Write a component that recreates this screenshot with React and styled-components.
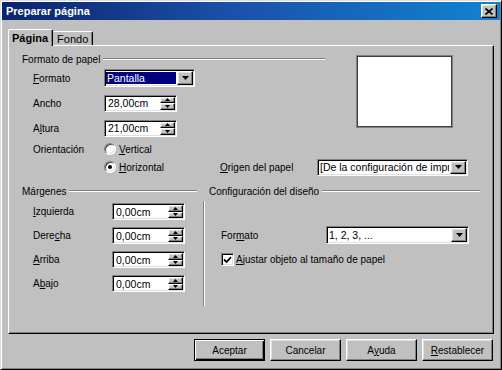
import styled, { createGlobalStyle } from "styled-components";

const GlobalStyle = createGlobalStyle`
  html, body {
    margin: 0;
    padding: 0;
    background: #c0c0c0;
  }
  body {
    font-family: "Liberation Sans", Arial, sans-serif;
    font-size: 10px;
    color: #000;
  }
`;

/** 3D 경계 (Windows classic) */
const raised = `
  border-style: solid;
  border-width: 1px;
  border-color: #fff #000 #000 #fff;
  box-shadow: inset -1px -1px #808080, inset 1px 1px #dfdfdf;
`;

const sunken = `
  border-style: solid;
  border-width: 1px;
  border-color: #808080 #fff #fff #808080;
  box-shadow: inset 1px 1px #000, inset -1px -1px #dfdfdf;
`;

const ArrowDown = ({ w = 7, h = 4 }) => (
  <svg width={w} height={h} viewBox={`0 0 ${w} ${h}`}>
    <polygon points={`0,0 ${w},0 ${w / 2},${h}`} fill="#000" />
  </svg>
);

const ArrowUp = ({ w = 5, h = 3 }) => (
  <svg width={w} height={h} viewBox={`0 0 ${w} ${h}`}>
    <polygon points={`0,${h} ${w},${h} ${w / 2},0`} fill="#000" />
  </svg>
);

/** 스핀 입력 */
const SpinField = ({ value, width = 73 }) => (
  <Field $width={width} $height={17}>
    <FieldText>{value}</FieldText>
    <SpinColumn>
      <SpinButton>
        <ArrowUp />
      </SpinButton>
      <SpinButton>
        <ArrowDown w={5} h={3} />
      </SpinButton>
    </SpinColumn>
  </Field>
);

/** 드롭다운 */
const Select = ({ value, width, height = 17, selected }) => (
  <Field $width={width} $height={height}>
    <SelectText $selected={selected}>{value}</SelectText>
    <DropButton>
      <ArrowDown />
    </DropButton>
  </Field>
);

const App = () => {
  return (
    <>
      <GlobalStyle />
      <Window>
        <TitleBar>
          <span>Preparar página</span>
          <CloseButton>
            <svg width="8" height="7" viewBox="0 0 8 7">
              <path d="M0.5 0.5 L7.5 6.5 M7.5 0.5 L0.5 6.5" stroke="#000" strokeWidth="1.6" />
            </svg>
          </CloseButton>
        </TitleBar>

        <Body>
          <TabStrip>
            <Tab $active>Página</Tab>
            <Tab>Fondo</Tab>
          </TabStrip>

          <Panel>
            <TopSection>
              <HeadRow>
                <PaperCol>
                  <GroupHeader>
                    <span>Formato de papel</span>
                    <Rule />
                  </GroupHeader>
                  <FieldList $gap={7} $top={3}>
                    <FieldRow $height={18}>
                      <Label $width={71}>
                        <Accel>F</Accel>ormato
                      </Label>
                      <Select value="Pantalla" width={91} height={18} selected />
                    </FieldRow>
                    <FieldRow $height={18}>
                      <Label $width={71}>Ancho</Label>
                      <SpinField value="28,00cm" width={73} />
                    </FieldRow>
                    <FieldRow $height={18}>
                      <Label $width={71}>
                        A<Accel>l</Accel>tura
                      </Label>
                      <SpinField value="21,00cm" width={73} />
                    </FieldRow>
                  </FieldList>
                </PaperCol>
                <Preview />
              </HeadRow>

              <FieldList $gap={0} $top={3}>
                <FieldRow $height={18}>
                  <Label $width={71}>Orientación</Label>
                  <RadioOption>
                    <Radio />
                    <span>
                      <Accel>V</Accel>ertical
                    </span>
                  </RadioOption>
                </FieldRow>
                <FieldRow $height={18}>
                  <Label $width={71} />
                  <RadioOption>
                    <Radio $checked />
                    <span>
                      <Accel>H</Accel>orizontal
                    </span>
                  </RadioOption>
                  <Label $width={97}>
                    <Accel>O</Accel>rigen del papel
                  </Label>
                  <Select value="[De la configuración de impres" width={151} />
                </FieldRow>
              </FieldList>
            </TopSection>

            <BottomSection>
              <MarginCol>
                <GroupHeader>
                  <span>Márgenes</span>
                  <Rule />
                </GroupHeader>
                <FieldList $gap={7} $top={5}>
                  <FieldRow $height={17}>
                    <Label $width={79}>
                      <Accel>I</Accel>zquierda
                    </Label>
                    <SpinField value="0,00cm" />
                  </FieldRow>
                  <FieldRow $height={17}>
                    <Label $width={79}>
                      Dere<Accel>c</Accel>ha
                    </Label>
                    <SpinField value="0,00cm" />
                  </FieldRow>
                  <FieldRow $height={17}>
                    <Label $width={79}>
                      <Accel>A</Accel>rriba
                    </Label>
                    <SpinField value="0,00cm" />
                  </FieldRow>
                  <FieldRow $height={17}>
                    <Label $width={79}>
                      A<Accel>b</Accel>ajo
                    </Label>
                    <SpinField value="0,00cm" />
                  </FieldRow>
                </FieldList>
              </MarginCol>

              <LayoutCol>
                <GroupHeader $indent={6}>
                  <span>Configuración del diseño</span>
                  <Rule />
                </GroupHeader>
                <LayoutBody>
                  <FieldRow $height={18} $indent={0}>
                    <Label $width={105}>
                      For<Accel>m</Accel>ato
                    </Label>
                    <Select value="1, 2, 3, ..." width={143} height={18} />
                  </FieldRow>
                  <CheckRow>
                    <CheckBox>
                      <svg width="9" height="8" viewBox="0 0 9 8">
                        <polyline points="1,3.5 3.5,6 8,1.2" fill="none" stroke="#000" strokeWidth="1.8" />
                      </svg>
                    </CheckBox>
                    <span>
                      <Accel>A</Accel>justar objeto al tamaño de papel
                    </span>
                  </CheckRow>
                </LayoutBody>
              </LayoutCol>
            </BottomSection>
          </Panel>

          <ButtonRow>
            <Button $default>Aceptar</Button>
            <Button>Cancelar</Button>
            <Button>
              A<Accel>y</Accel>uda
            </Button>
            <Button>
              <Accel>R</Accel>establecer
            </Button>
          </ButtonRow>
        </Body>
      </Window>
    </>
  );
};

export default App;

const Window = styled.div`
  width: 502px;
  height: 370px;
  box-sizing: border-box;
  background: #c0c0c0;
  border: 1px solid;
  border-color: #dfdfdf #000 #000 #dfdfdf;
  box-shadow: inset 1px 1px #fff, inset -1px -1px #808080;
  padding: 1px;
  display: flex;
  flex-direction: column;
`;

const TitleBar = styled.div`
  height: 18px;
  flex-shrink: 0;
  display: flex;
  align-items: center;
  justify-content: space-between;
  padding: 0 3px 0 4px;
  background: linear-gradient(to right, #0a246a 0%, #1c4fa8 45%, #1084d0 100%);
  color: #fff;
  font-size: 11px;
  font-weight: bold;
`;

const CloseButton = styled.div`
  width: 16px;
  height: 14px;
  box-sizing: border-box;
  background: #c0c0c0;
  ${raised}
  display: flex;
  align-items: center;
  justify-content: center;
`;

const Body = styled.div`
  flex: 1;
  display: flex;
  flex-direction: column;
  padding: 9px 6px 0 6px;
`;

const TabStrip = styled.div`
  display: flex;
  align-items: flex-end;
  height: 17px;
  margin-bottom: -1px;
  position: relative;
  z-index: 1;
`;

const Tab = styled.div`
  box-sizing: border-box;
  background: #c0c0c0;
  font-size: 11px;
  border-style: solid;
  border-color: #fff #000 transparent #fff;
  border-radius: 2px 2px 0 0;
  box-shadow: inset -1px 0 #808080;
  display: flex;
  align-items: center;
  ${({ $active }) =>
    $active
      ? `
    height: 17px;
    padding: 0 4px 1px 3px;
    border-width: 1px 1px 0 1px;
    font-weight: bold;
  `
      : `
    height: 14px;
    margin-bottom: 1px;
    padding: 0 4px 0 4px;
    border-width: 1px 1px 0 0;
  `}
`;

const Panel = styled.div`
  height: 289px;
  box-sizing: border-box;
  border: 1px solid;
  border-color: #fff #000 #000 #fff;
  box-shadow: inset -1px -1px #808080;
  display: flex;
  flex-direction: column;
`;

const TopSection = styled.div`
  padding: 6px 0 0 13px;
  display: flex;
  flex-direction: column;
`;

const HeadRow = styled.div`
  display: flex;
  gap: 32px;
`;

const PaperCol = styled.div`
  width: 303px;
  display: flex;
  flex-direction: column;
`;

const GroupHeader = styled.div`
  height: 14px;
  display: flex;
  align-items: center;
  gap: 3px;
  padding-left: ${({ $indent }) => $indent || 0}px;
  white-space: nowrap;
`;

const Rule = styled.div`
  flex: 1;
  height: 0;
  border-top: 1px solid #808080;
  border-bottom: 1px solid #fff;
`;

const Preview = styled.div`
  width: 95px;
  height: 71px;
  margin-top: 4px;
  box-sizing: border-box;
  background: #fff;
  border: 1px solid #404040;
  box-shadow: 0 0 0 1px #808080;
`;

const FieldList = styled.div`
  display: flex;
  flex-direction: column;
  gap: ${({ $gap }) => $gap}px;
  margin-top: ${({ $top }) => $top}px;
`;

const FieldRow = styled.div`
  height: ${({ $height }) => $height}px;
  display: flex;
  align-items: center;
  padding-left: ${({ $indent }) => ($indent === undefined ? 11 : $indent)}px;
`;

const Label = styled.div`
  width: ${({ $width }) => $width}px;
  flex-shrink: 0;
  white-space: nowrap;
`;

const Accel = styled.span`
  text-decoration: underline;
`;

const Field = styled.div`
  width: ${({ $width }) => $width}px;
  height: ${({ $height }) => $height}px;
  box-sizing: border-box;
  flex-shrink: 0;
  background: #fff;
  ${sunken}
  padding: 1px;
  display: flex;
  align-items: stretch;
  overflow: hidden;
`;

const FieldText = styled.div`
  flex: 1;
  min-width: 0;
  padding-left: 2px;
  display: flex;
  align-items: center;
  white-space: nowrap;
  font-size: 10.5px;
`;

const SelectText = styled(FieldText)`
  overflow: hidden;
  margin: 1px 1px 1px 0;
  padding-left: 1px;
  background: ${({ $selected }) => ($selected ? "#000080" : "#fff")};
  color: ${({ $selected }) => ($selected ? "#fff" : "#000")};
`;

const SpinColumn = styled.div`
  width: 15px;
  display: flex;
  flex-direction: column;
`;

const SpinButton = styled.div`
  flex: 1;
  box-sizing: border-box;
  background: #c0c0c0;
  ${raised}
  display: flex;
  align-items: center;
  justify-content: center;
`;

const DropButton = styled.div`
  width: 16px;
  flex-shrink: 0;
  box-sizing: border-box;
  background: #c0c0c0;
  ${raised}
  display: flex;
  align-items: center;
  justify-content: center;
`;

const RadioOption = styled.div`
  width: 116px;
  display: flex;
  align-items: center;
  gap: 2px;
  flex-shrink: 0;
`;

const Radio = styled.div`
  width: 12px;
  height: 12px;
  box-sizing: border-box;
  border-radius: 50%;
  border: 1px solid;
  border-color: #808080 #fff #fff #808080;
  background: #fff;
  box-shadow: inset 1px 1px #404040, inset -1px -1px #dfdfdf;
  position: relative;
  margin-right: 1px;
  &::after {
    content: "";
    display: ${({ $checked }) => ($checked ? "block" : "none")};
    position: absolute;
    left: 3px;
    top: 3px;
    width: 4px;
    height: 4px;
    border-radius: 50%;
    background: #000;
  }
`;

const BottomSection = styled.div`
  display: flex;
  padding-left: 13px;
  margin-top: 8px;
  gap: 6px;
`;

const MarginCol = styled.div`
  width: 175px;
  display: flex;
  flex-direction: column;
`;

const LayoutCol = styled.div`
  width: 277px;
  display: flex;
  flex-direction: column;
`;

const LayoutBody = styled.div`
  margin-top: 3px;
  height: 105px;
  box-sizing: border-box;
  border-left: 1px solid #808080;
  box-shadow: inset 1px 0 #fff;
  padding: 25px 0 0 17px;
  display: flex;
  flex-direction: column;
`;

const CheckRow = styled.div`
  margin-top: 9px;
  height: 13px;
  display: flex;
  align-items: center;
  gap: 2px;
`;

const CheckBox = styled.div`
  width: 13px;
  height: 13px;
  box-sizing: border-box;
  background: #fff;
  ${sunken}
  display: flex;
  align-items: center;
  justify-content: center;
`;

const ButtonRow = styled.div`
  display: flex;
  justify-content: flex-end;
  gap: 5px;
  margin-top: 5px;
  padding-right: 1px;
`;

const Button = styled.div`
  width: 71px;
  height: 22px;
  box-sizing: border-box;
  background: #c0c0c0;
  display: flex;
  align-items: center;
  justify-content: center;
  ${({ $default }) =>
    $default
      ? `
    border: 1px solid #000;
    box-shadow: inset 1px 1px #fff, inset -1px -1px #000, inset -2px -2px #808080;
  `
      : raised}
`;
